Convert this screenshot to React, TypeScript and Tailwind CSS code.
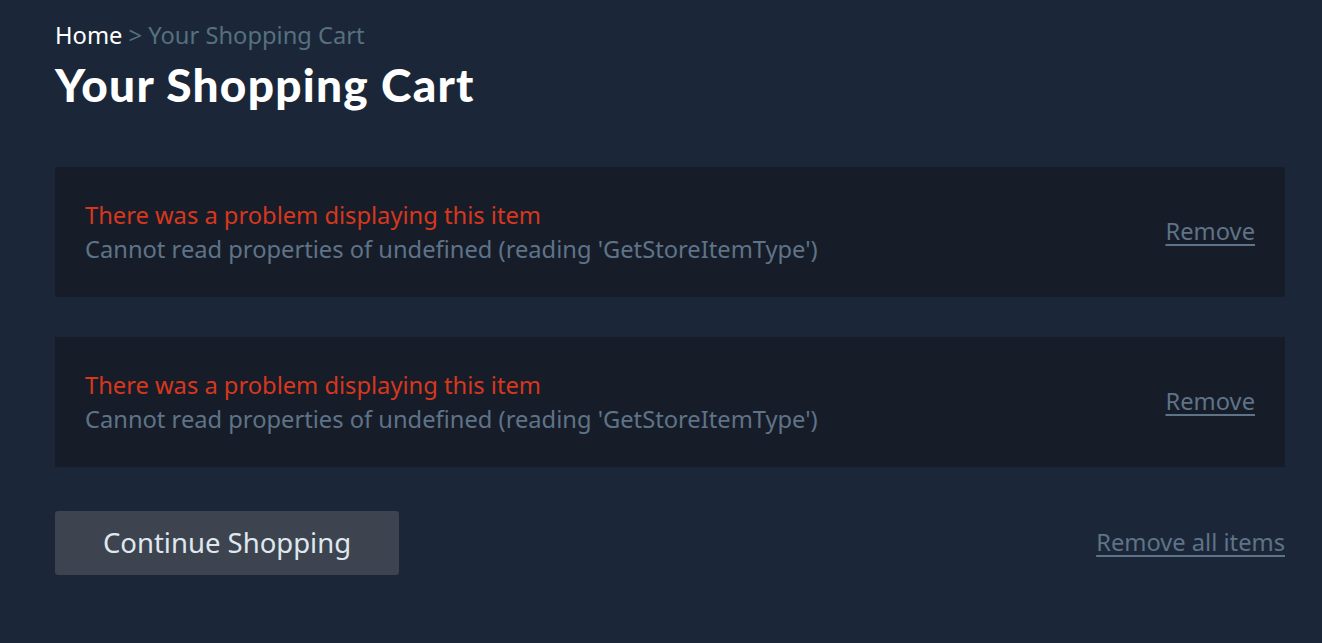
const CartError = () => {
  return (
    <div className="flex h-[130px] items-center justify-between bg-[#161d28] px-[30px]">
      <div className="flex flex-col">
        <p className="text-[23.7px] leading-[34px] text-[#d9361e]">There was a problem displaying this item</p>
        <p className="text-[23.7px] leading-[34px] text-[#5f7388]">Cannot read properties of undefined (reading 'GetStoreItemType')</p>
      </div>
      <a href="#" className="text-[23.7px] text-[#5f7388] underline underline-offset-4">Remove</a>
    </div>
  )
}

export default function App() {
  return (
    <div className="min-h-[643px] w-full bg-[#1b2738] pl-[55px] pr-[37px] pt-[18px] font-['Noto_Sans',sans-serif]">
      <div className="text-[23.7px] leading-[34px]">
        <span className="text-white">Home</span>
        <span className="text-[#56707f]"> &gt; Your Shopping Cart</span>
      </div>
      <h1 className="mt-[8px] font-['Lato',sans-serif] text-[46px] font-black leading-[50px] tracking-[1.25px] text-white">Your Shopping Cart</h1>

      <div className="mt-[57px] flex flex-col gap-[40px]">
        <CartError />
        <CartError />
      </div>

      <div className="mt-[44px] flex items-center justify-between">
        <button className="h-[64px] w-[344px] rounded-[3px] bg-[#3d4450] text-[27.5px] text-[#dfe8ee]">Continue Shopping</button>
        <a href="#" className="text-[23.7px] text-[#5f7388] underline underline-offset-4">Remove all items</a>
      </div>
    </div>
  )
}
